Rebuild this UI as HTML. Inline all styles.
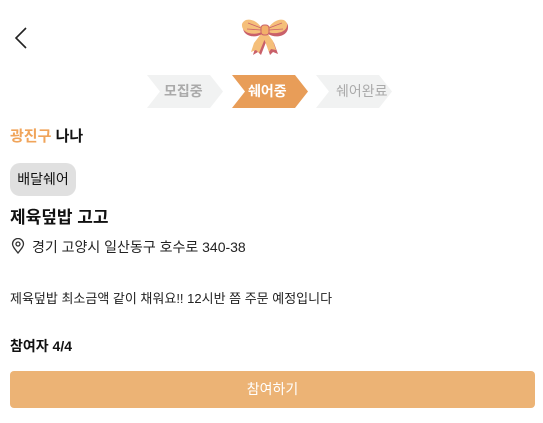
<!DOCTYPE html>
<html><head><meta charset="utf-8"><style>
*{margin:0;padding:0;box-sizing:border-box}
body{width:543px;height:423px;background:#fff;font-family:"Liberation Sans","Noto Sans CJK KR",sans-serif;color:#111;position:relative;overflow:hidden}
.a{position:absolute;white-space:nowrap}
.step{position:absolute;top:75px;height:33px;font-size:14px;line-height:33px;font-weight:bold}
</style></head><body>
<svg class="a" style="left:14px;top:27px" width="14" height="22" viewBox="0 0 14 22"><path d="M12 1 L2 11 L12 21" fill="none" stroke="#222" stroke-width="1.6"/></svg>
<svg class="a" style="left:241px;top:17px" width="48" height="40" viewBox="0 0 48 40">
<path d="M25 14 L15 28 L12 38 L17 35 L20 38 L27 20Z" fill="#c9606a"/>
<path d="M24 14 L33 26 L37 37 L32 35 L29 38 L23 20Z" fill="#c9606a"/>
<path d="M23 13 L13 26 L10 35 L15 33 L18 36 L25 19Z" fill="#f5bf7a"/>
<path d="M24 13 L32 24 L35 33 L30 32 L28 35 L22 19Z" fill="#f5bf7a"/>
<path d="M21 12 C13 1 3 2 2 9 C1 19 13 22 21 17Z" fill="#c9606a"/>
<path d="M27 12 C35 1 46 2 47 9 C48 19 35 22 27 17Z" fill="#c9606a"/>
<path d="M21 11 C13 0 3 1 1 7 C0 16 12 19 21 15Z" fill="#f5bf7a"/>
<path d="M27 11 C35 0 45 1 46 7 C47 15 35 18 27 15Z" fill="#f5bf7a"/>
<path d="M20 11 L7 6 M20 13 L6 12 M28 11 L41 6 M28 13 L42 12" stroke="#c9606a" stroke-width="0.8"/>
<rect x="20" y="8" width="8" height="10" rx="3" fill="#f2b06a" stroke="#c9606a" stroke-width="1"/>
</svg>
<svg class="a" style="left:147px;top:75px" width="250" height="33" viewBox="0 0 250 33">
<path d="M0 0 H63 L76 16.5 L63 33 H0 L13 16.5Z" fill="#f1f2f2"/>
<path d="M85 0 H148 L161 16.5 L148 33 H85 L98 16.5Z" fill="#e89d58"/>
<path d="M169 0 H232 L245 16.5 L232 33 H169 L182 16.5Z" fill="#f1f2f2"/>
</svg>
<div class="step" style="left:164px;color:#aaa">모집중</div>
<div class="step" style="left:248px;color:#fff">쉐어중</div>
<div class="step" style="left:336px;color:#aaa;font-weight:normal">쉐어완료</div>
<div class="a" style="left:10px;top:125px;font-size:15px;font-weight:bold"><span style="color:#f0a45a">광진구</span> 나나</div>
<div class="a" style="left:10px;top:163px;height:33px;width:66px;background:#e0e0e0;border-radius:10px;font-size:14px;line-height:33px;text-align:center">배달쉐어</div>
<div class="a" style="left:10px;top:203px;font-size:17px;font-weight:bold">제육덮밥 고고</div>
<svg class="a" style="left:11px;top:238px" width="14" height="16" viewBox="0 0 14 16"><path d="M7 15 C3 10 1.5 8 1.5 6 A5.5 5.5 0 0 1 12.5 6 C12.5 8 11 10 7 15Z" fill="none" stroke="#333" stroke-width="1.3"/><circle cx="7" cy="6" r="2" fill="none" stroke="#333" stroke-width="1.3"/></svg>
<div class="a" style="left:32px;top:237px;font-size:14px;color:#222">경기 고양시 일산동구 호수로 340-38</div>
<div class="a" style="left:10px;top:288px;font-size:13px;color:#222">제육덮밥 최소금액 같이 채워요!! 12시반 쯤 주문 예정입니다</div>
<div class="a" style="left:10px;top:336px;font-size:14px;font-weight:bold">참여자 4/4</div>
<div class="a" style="left:10px;top:371px;width:525px;height:37px;background:#ecb375;border-radius:4px;color:#fff;font-size:14px;line-height:37px;text-align:center">참여하기</div>
</body></html>
